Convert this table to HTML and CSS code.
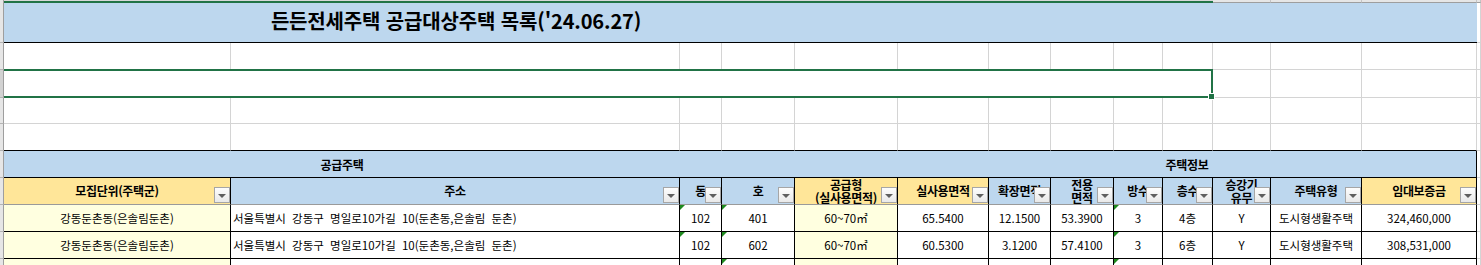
FILE: index.html
```html
<!DOCTYPE html>
<html lang="ko">
<head>
<meta charset="utf-8">
<title>든든전세주택 공급대상주택 목록</title>
<link rel="stylesheet" href="styles.css">
</head>
<body>
<div class="sheet">
  <div class="row strip">
    <div class="corner"></div>
    <div class="ch on"></div><div class="ch on"></div><div class="ch on"></div><div class="ch on"></div><div class="ch on"></div>
    <div class="ch on"></div><div class="ch on"></div><div class="ch on"></div><div class="ch on"></div><div class="ch on"></div>
    <div class="ch"></div><div class="ch"></div><div class="ch"></div><div class="ch"></div>
  </div>

  <div class="row h40">
    <div class="rh"></div>
    <div class="title-cell"><h1 class="title">든든전세주택 공급대상주택 목록('24.06.27)</h1></div>
    <div class="title-fill"></div>
    <div class="gc"></div>
  </div>

  <div class="row h27">
    <div class="rh"></div>
    <div class="gc"></div><div class="gc"></div><div class="gc"></div><div class="gc"></div><div class="gc"></div>
    <div class="gc"></div><div class="gc"></div><div class="gc"></div><div class="gc"></div><div class="gc"></div>
    <div class="gc"></div><div class="gc"></div><div class="gc"></div><div class="gc"></div>
  </div>

  <div class="row h28">
    <div class="rh on"></div>
    <div class="selbox"></div>
    <div class="gc"></div><div class="gc"></div><div class="gc"></div><div class="gc"></div>
  </div>

  <div class="row h26">
    <div class="rh"></div>
    <div class="gc"></div><div class="gc"></div><div class="gc"></div><div class="gc"></div><div class="gc"></div>
    <div class="gc"></div><div class="gc"></div><div class="gc"></div><div class="gc"></div><div class="gc"></div>
    <div class="gc"></div><div class="gc"></div><div class="gc"></div><div class="gc"></div>
  </div>

  <div class="row h27">
    <div class="rh"></div>
    <div class="gc bb"></div><div class="gc bb"></div><div class="gc bb"></div><div class="gc bb"></div><div class="gc bb"></div>
    <div class="gc bb"></div><div class="gc bb"></div><div class="gc bb"></div><div class="gc bb"></div><div class="gc bb"></div>
    <div class="gc bb"></div><div class="gc bb"></div><div class="gc bb"></div><div class="gc"></div>
  </div>

  <div class="row h27">
    <div class="rh"></div>
    <div class="band band-a">공급주택</div>
    <div class="band band-c"></div>
    <div class="band band-f">주택정보</div>
    <div class="gc"></div>
  </div>

  <div class="row h27">
    <div class="rh"></div>
    <div class="hd y"><span>모집단위(주택군)</span><i class="fb"></i></div>
    <div class="hd b"><span>주소</span><i class="fb"></i></div>
    <div class="hd b"><span>동</span><i class="fb"></i></div>
    <div class="hd b"><span>호</span><i class="fb"></i></div>
    <div class="hd y two"><span>공급형<br>(실사용면적)</span><i class="fb"></i></div>
    <div class="hd y"><span>실사용면적</span><i class="fb"></i></div>
    <div class="hd b"><span>확장면적</span><i class="fb"></i></div>
    <div class="hd b two"><span>전용<br>면적</span><i class="fb"></i></div>
    <div class="hd b"><span>방수</span><i class="fb"></i></div>
    <div class="hd b"><span>층수</span><i class="fb"></i></div>
    <div class="hd b two"><span>승강기<br>유무</span><i class="fb"></i></div>
    <div class="hd b"><span>주택유형</span><i class="fb"></i></div>
    <div class="hd y"><span>임대보증금</span><i class="fb"></i></div>
    <div class="gc"></div>
  </div>

  <div class="row h27">
    <div class="rh"></div>
    <div class="d y">강동둔촌동(은솔림둔촌)</div>
    <div class="d l addr">서울특별시 강동구 명일로10가길 10(둔촌동,은솔림 둔촌)</div>
    <div class="d t">102</div>
    <div class="d t">401</div>
    <div class="d y">60~70㎡</div>
    <div class="d">65.5400</div>
    <div class="d">12.1500</div>
    <div class="d">53.3900</div>
    <div class="d t">3</div>
    <div class="d">4층</div>
    <div class="d">Y</div>
    <div class="d">도시형생활주택</div>
    <div class="d">324,460,000</div>
    <div class="gc"></div>
  </div>

  <div class="row h27">
    <div class="rh"></div>
    <div class="d y">강동둔촌동(은솔림둔촌)</div>
    <div class="d l addr">서울특별시 강동구 명일로10가길 10(둔촌동,은솔림 둔촌)</div>
    <div class="d t">102</div>
    <div class="d t">602</div>
    <div class="d y">60~70㎡</div>
    <div class="d">60.5300</div>
    <div class="d">3.1200</div>
    <div class="d">57.4100</div>
    <div class="d t">3</div>
    <div class="d">6층</div>
    <div class="d">Y</div>
    <div class="d">도시형생활주택</div>
    <div class="d">308,531,000</div>
    <div class="gc"></div>
  </div>

  <div class="row h27">
    <div class="rh"></div>
    <div class="d y"></div>
    <div class="d"></div>
    <div class="d"></div>
    <div class="d t"></div>
    <div class="d y"></div>
    <div class="d"></div>
    <div class="d"></div>
    <div class="d"></div>
    <div class="d t"></div>
    <div class="d"></div>
    <div class="d"></div>
    <div class="d"></div>
    <div class="d"></div>
    <div class="gc"></div>
  </div>
</div>
</body>
</html>
```

FILE: styles.css
```css
html, body {
  margin: 0;
  padding: 0;
  background: #fff;
}

body {
  font-family: "Noto Sans CJK KR", "Noto Sans", sans-serif;
  color: #000;
}

.sheet {
  --cols: 4px 227px 449px 42px 73px 103px 91px 62px 63px 49px 50px 58px 91px 115px 1fr;
  width: 1481px;
  height: 265px;
  overflow: hidden;
  display: flex;
  flex-direction: column;
}

.row {
  display: grid;
  grid-template-columns: var(--cols);
  flex: none;
}

.row > * {
  box-sizing: border-box;
  min-width: 0;
}

.strip { height: 3px; }
.h40 { height: 40px; }
.h28 { height: 28px; }
.h27 { height: 27px; }
.h26 { height: 26px; }

/* column header remnant */
.corner {
  background: #e6e6e6;
  border-right: 1px solid #a0a0a0;
}
.ch {
  background: #e6e6e6;
  border-right: 1px solid #c4c4c4;
  border-bottom: 1px solid #9e9e9e;
}
.ch.on {
  background: #d8d8d8;
  border-right: 0;
  border-bottom: 2px solid #217346;
}

/* row header remnant */
.rh {
  background: #e6e6e6;
  border-right: 1px solid #9e9e9e;
  border-bottom: 1px solid #b4b4b4;
}
.rh.on { background: #d2d2d2; }

/* plain grid cells */
.gc {
  background: #fff;
  border-right: 1px solid #d4d4d4;
  border-bottom: 1px solid #d4d4d4;
}
.gc.bb { border-bottom: 1px solid #000; }

/* title */
.title-cell {
  grid-column: 2 / 7;
  background: #bdd7ee;
  border-bottom: 1px solid #000;
  display: flex;
  align-items: center;
  justify-content: center;
  padding-left: 10px;
  padding-bottom: 3px;
}
.title-fill {
  grid-column: 7 / 15;
  background: #bdd7ee;
  border-bottom: 1px solid #000;
}
.title {
  margin: 0;
  font-size: 20px;
  font-weight: 700;
  letter-spacing: -0.15px;
  white-space: nowrap;
  line-height: 1;
}

/* selection */
.selbox {
  grid-column: 2 / 12;
  position: relative;
  margin-top: -1px;
  border-top: 2px solid #217346;
  border-right: 2px solid #217346;
  border-bottom: 2px solid #217346;
  background: #fff;
}
.selbox::after {
  content: "";
  position: absolute;
  right: -4px;
  bottom: -4px;
  width: 5px;
  height: 5px;
  background: #217346;
  border: 1px solid #fff;
}

/* band row */
.band {
  background: #bdd7ee;
  border-bottom: 1px solid #000;
  display: flex;
  align-items: center;
  justify-content: center;
  font-size: 12px;
  font-weight: 700;
  letter-spacing: -0.3px;
  white-space: nowrap;
}
.band-a { grid-column: 2 / 4; }
.band-c { grid-column: 4 / 7; }
.band-f { grid-column: 7 / 15; border-right: 1px solid #000; }

/* header row */
.hd {
  position: relative;
  display: flex;
  align-items: center;
  justify-content: center;
  text-align: center;
  border-right: 1px solid #000;
  border-bottom: 1px solid #9a9a9a;
  font-size: 12px;
  font-weight: 700;
  letter-spacing: -0.3px;
  line-height: 13px;
  white-space: nowrap;
  overflow: hidden;
}
.hd span { padding-bottom: 1px; }
.hd.two span { padding-bottom: 0; }
.hd.y { background: #ffe699; }
.hd.b { background: #bdd7ee; }

.fb {
  position: absolute;
  right: 0;
  bottom: 1px;
  width: 16px;
  height: 16px;
  box-sizing: border-box;
  border: 1px solid #a6a6a6;
  background: linear-gradient(#fdfdfd, #e9e9e9);
}
.fb::after {
  content: "";
  position: absolute;
  left: 3px;
  top: 6px;
  width: 0;
  height: 0;
  border-left: 4px solid transparent;
  border-right: 4px solid transparent;
  border-top: 4px solid #5f5f5f;
}

/* data cells */
.d {
  position: relative;
  display: flex;
  align-items: center;
  justify-content: center;
  background: #fff;
  border-right: 1px solid #000;
  border-bottom: 1px solid #000;
  font-size: 11.5px;
  white-space: nowrap;
  overflow: hidden;
}
.d.y { background: #ffffe0; }
.d.l {
  justify-content: flex-start;
  padding-left: 2px;
}
.addr { word-spacing: 3px; }
.d.t::before {
  content: "";
  position: absolute;
  left: 0;
  top: 0;
  width: 0;
  height: 0;
  border-top: 5px solid #1f8a1f;
  border-right: 5px solid transparent;
}
```
